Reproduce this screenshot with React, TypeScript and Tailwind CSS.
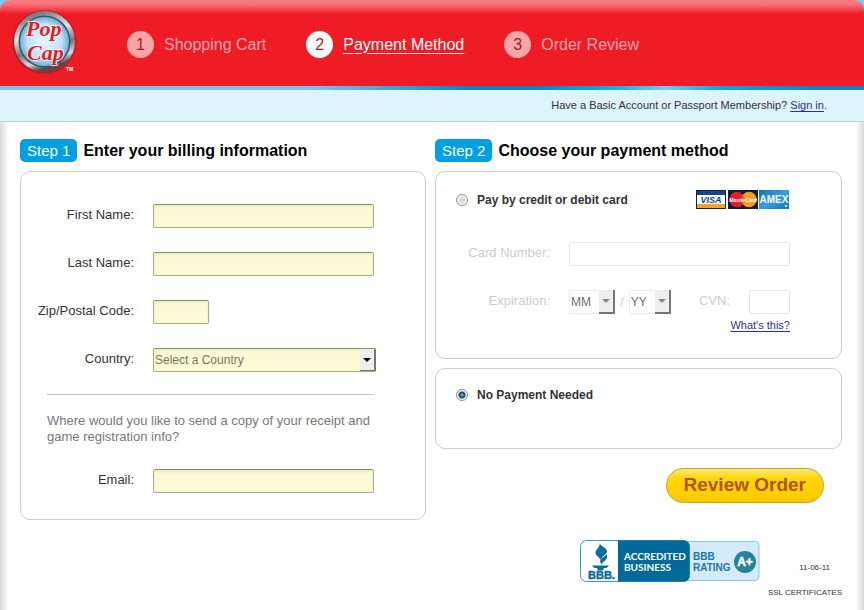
import type { ReactNode } from 'react';

const steps = [
  { number: 1, label: 'Shopping Cart' },
  { number: 2, label: 'Payment Method' },
  { number: 3, label: 'Order Review' },
];

const currentStep = 2;

function Logo() {
  return (
    <svg width="66" height="68" viewBox="0 0 66 68" role="img" aria-label="PopCap">
      <defs>
        <linearGradient id="ring" x1="0" y1="0" x2="0.3" y2="1">
          <stop offset="0" stopColor="#4d4a4b" />
          <stop offset="0.2" stopColor="#8f8f92" />
          <stop offset="0.45" stopColor="#e4e4e6" />
          <stop offset="0.7" stopColor="#77777a" />
          <stop offset="0.88" stopColor="#d8d8da" />
          <stop offset="1" stopColor="#5a4a4a" />
        </linearGradient>
        <radialGradient id="disc" cx="0.5" cy="0.5" r="0.5">
          <stop offset="0" stopColor="#e9f5fd" />
          <stop offset="0.7" stopColor="#c3e2f5" />
          <stop offset="1" stopColor="#6fb0d8" />
        </radialGradient>
      </defs>
      <circle cx="32.5" cy="33" r="32" fill="#8e1b20" opacity="0.5" />
      <circle cx="32.5" cy="32.5" r="30.5" fill="url(#ring)" />
      <circle cx="32.5" cy="32.5" r="26" fill="#33576d" />
      <circle cx="32.5" cy="32.5" r="24.5" fill="url(#disc)" />
      <g
        fontFamily="'Liberation Serif', serif"
        fontWeight="bold"
        fontStyle="italic"
        fill="#e01b24"
        stroke="#ffffff"
        strokeWidth="1.4"
        paintOrder="stroke"
        strokeLinejoin="round"
      >
        <text x="14" y="27" fontSize="22">Pop</text>
        <text x="15" y="51" fontSize="22">Cap</text>
      </g>
      <text x="54" y="62" fontFamily="'Liberation Sans', sans-serif" fontWeight="bold" fontSize="5" fill="#fff">TM</text>
    </svg>
  );
}

function CardLogos() {
  return (
    <svg width="94" height="20" viewBox="0 0 94 20" role="img" aria-label="Visa, MasterCard, American Express">
      <defs>
        <linearGradient id="amex" x1="0" y1="0" x2="1" y2="1">
          <stop offset="0" stopColor="#1471b5" />
          <stop offset="0.5" stopColor="#3b9fd6" />
          <stop offset="1" stopColor="#1176bb" />
        </linearGradient>
      </defs>
      <g fontFamily="'Liberation Sans', sans-serif" fontWeight="bold">
        <rect x="0" y="0" width="30" height="19" fill="#1c2434" />
        <rect x="1" y="1" width="28" height="17" fill="#fff" />
        <rect x="1" y="1" width="28" height="4" fill="#17448a" />
        <rect x="1" y="14" width="28" height="4" fill="#f3a22c" />
        <text x="15" y="13" fontSize="9" fontStyle="italic" textAnchor="middle" fill="#173e80">VISA</text>

        <rect x="32" y="0" width="30" height="19" fill="#171a3c" />
        <circle cx="41" cy="9.5" r="7.7" fill="#e0202a" />
        <circle cx="53" cy="9.5" r="7.7" fill="#f5a01f" />
        <path d="M47 4.7a7.7 7.7 0 0 1 0 9.6a7.7 7.7 0 0 1 0-9.6" fill="#e9642a" />
        <text x="47" y="11.5" fontSize="5" fontStyle="italic" textAnchor="middle" fill="#fff">MasterCard</text>

        <rect x="63" y="0" width="30" height="19" fill="url(#amex)" />
        <text x="78" y="13" fontSize="10" textAnchor="middle" fill="#f2faff">AMEX</text>
        <rect x="89" y="15" width="2" height="2" fill="#d9effa" />
      </g>
    </svg>
  );
}

function BbbSeal() {
  return (
    <svg width="180" height="42" viewBox="0 0 180 42" role="img" aria-label="BBB accredited business, rating A+">
      <rect x="70" y="1.5" width="109" height="39" rx="4" fill="#d3ebf8" stroke="#8fc6df" />
      <rect x="0.5" y="0.5" width="109" height="41" rx="6" fill="#fff" stroke="#3e93b8" />
      <path d="M38 0.5h66a5.5 5.5 0 0 1 5.5 5.5v30a5.5 5.5 0 0 1-5.5 5.5H38z" fill="#006b9a" />
      <g fill="#0a6f9d">
        <path d="M19.500 3c1 3.500 7.500 4.500 7.500 8.500c0 3-5 4.500-6.500 8c-1-2-5-3.500-5-7c0-3.500 5-5 4-9.500z" />
        <path d="M26.500 14c1.500 3.500 0 5.500-2 7c-1.500 1.200-2.500 2-2.500 3.500c-1.500-1.200-2.500-2.800-1.500-5c1-2.200 5-2.500 6-5.500z" />
        <path d="M12 25.500h17l-2.500 2.500h-2.500l-1 2.500h-5l-1-2.500h-2.500z" />
      </g>
      <g fontFamily="'Liberation Sans', sans-serif" fontWeight="bold">
        <text x="8" y="39" fontSize="11" fill="#0a6f9d" stroke="#0a6f9d" strokeWidth="0.5">BBB.</text>
      </g>
      <g fontFamily="Lato, sans-serif" fontWeight="bold">
        <text x="44" y="20" fontSize="10" fill="#fff">ACCREDITED</text>
        <text x="44" y="31" fontSize="10" fill="#fff">BUSINESS</text>
      </g>
      <g fontFamily="'Liberation Sans', sans-serif" fontWeight="bold">
        <text x="113" y="20" fontSize="10" fill="#1c78a6">BBB</text>
        <text x="113" y="31" fontSize="10" fill="#1c78a6">RATING</text>
        <circle cx="165" cy="22" r="11" fill="#26839a" />
        <text x="165" y="26" fontSize="12" textAnchor="middle" fill="#fff" stroke="#fff" strokeWidth="0.5">A+</text>
      </g>
    </svg>
  );
}

function Arrow() {
  return (
    <svg width="8" height="4" viewBox="0 0 8 4" aria-hidden="true">
      <path d="M0 0h8l-4 4z" fill="currentColor" />
    </svg>
  );
}

function StepTitle({ step, children }: { step: number; children: ReactNode }) {
  return (
    <div className="mb-[9px] flex items-center gap-[6px]">
      <span className="rounded-[5px] bg-[#009fe3] px-[7px] text-[15px] leading-[23px] text-white whitespace-nowrap">
        Step {step}
      </span>
      <h2 className="text-base leading-[23px] font-bold text-black">{children}</h2>
    </div>
  );
}

function BillingField({ id, label, type = 'text', width }: { id: string; label: string; type?: string; width: string }) {
  return (
    <div className="flex items-center gap-[19px]">
      <label htmlFor={id} className="w-[113px] shrink-0 pb-0.5 text-right text-[#333]">{label}</label>
      <input
        id={id}
        type={type}
        className={`${width} h-6 min-w-0 rounded-[2px] border border-[#a9aa87] border-t-[#8b8c68] bg-[#fafbd5] px-1 shadow-[inset_0_2px_2px_#ecedc9] outline-none`}
      />
    </div>
  );
}

function ExpirySelect({ id, label, placeholder, width }: { id: string; label: string; placeholder: string; width: string }) {
  return (
    <div className={`relative ${width}`}>
      <select
        id={id}
        aria-label={label}
        disabled
        className="block h-6 w-full appearance-none rounded-[2px] border border-[#ececec] bg-white pl-px text-xs text-[#6d6d6d]"
      >
        <option>{placeholder}</option>
      </select>
      <span className="pointer-events-none absolute inset-y-0 right-0 flex w-4 items-center justify-center border-r-2 border-b-2 border-[#777] bg-[#eee] text-[#888]">
        <Arrow />
      </span>
    </div>
  );
}

const radioStyle =
  'size-3 shrink-0 appearance-none rounded-full border border-[#8e8f8f] bg-[radial-gradient(circle,#c9c9c9_0,#ececec_4px,#fff_5px)] checked:bg-[radial-gradient(circle,#8fd0ee_0,#1c5f8c_2px,#17466b_3px,#f0f0f0_4px)]';

export default function App() {
  return (
    <div className="flex min-h-screen flex-col bg-[#7bcbf0] font-['Liberation_Sans',Arial,sans-serif] text-[13px]">
      <header className="flex h-[86px] items-center rounded-t-[10px] bg-[linear-gradient(#f97b83_0,#f8727a_4px,#ee1c25_14px)] pl-3">
        <Logo />
        <nav className="ml-[49px]">
          <ol className="flex items-center gap-10">
            {steps.map((step) => (
              <li
                key={step.number}
                className={`flex items-center gap-[10px] pt-[3px] text-base ${step.number === currentStep ? 'text-white' : 'text-[#f8a5a8]'}`}
              >
                <span
                  className={`flex size-[27px] items-center justify-center rounded-full text-[#a51c22] ${step.number === currentStep ? 'bg-white' : 'bg-[#f8a5a8]'}`}
                >
                  {step.number}
                </span>
                {step.number === currentStep ? (
                  <a href="#payment" className="underline underline-offset-3">{step.label}</a>
                ) : (
                  <span>{step.label}</span>
                )}
              </li>
            ))}
          </ol>
        </nav>
      </header>

      <div className="h-1 bg-[linear-gradient(to_right,#78c5ec_0%,#78c5ec_36%,#0c82c9_54%,#0c82c9_62%,#0fb0e6_71%,#78c9ec_77%,#0fa8e0_83%,#1580c8_94%)]" />

      <div className="h-8 border-b border-[#c3d3d8] bg-[#dcf4fe] pr-[37px] text-right text-[11px] leading-[31px] text-[#333]">
        Have a Basic Account or Passport Membership?{' '}
        <a href="#signin" className="text-[#2e3192] underline underline-offset-2">Sign in</a>.
      </div>

      <main className="grow bg-[linear-gradient(to_right,#d9d9d9_0,#fff_9px,#fff_calc(100%-9px),#d9d9d9_100%)] pt-[17px] pr-[22px] pl-5">
        <form className="grid grid-cols-[406fr_407fr] items-start gap-[9px]">
          <section>
            <StepTitle step={1}>Enter your billing information</StepTitle>
            <div className="rounded-[10px] border border-[#ccc] bg-white pt-8 pb-[26px]">
              <div className="flex flex-col gap-6">
                <BillingField id="first-name" label="First Name:" width="w-[221px]" />
                <BillingField id="last-name" label="Last Name:" width="w-[221px]" />
                <BillingField id="zip" label="Zip/Postal Code:" width="w-14" />
                <div className="flex items-center gap-[19px]">
                  <label htmlFor="country" className="w-[113px] shrink-0 pb-0.5 text-right text-[#333]">Country:</label>
                  <div className="relative w-[223px]">
                    <select
                      id="country"
                      className="block h-6 w-full appearance-none rounded-[2px] border border-[#a9aa87] border-t-[#8b8c68] bg-[#fafbd5] pl-px text-xs text-[#77785a] shadow-[inset_0_2px_2px_#ecedc9]"
                    >
                      <option>Select a Country</option>
                    </select>
                    <span className="pointer-events-none absolute inset-y-px right-0 flex w-4 items-center justify-center border-r-2 border-b border-[#77776a] bg-[#eee] text-black">
                      <Arrow />
                    </span>
                  </div>
                </div>
              </div>
              <div className="mt-[22px] mr-[51px] ml-[26px] border-t border-[#c4c4c4] pt-[18px] leading-4 text-[#777]">
                Where would you like to send a copy of your receipt and game registration info?
              </div>
              <div className="mt-6">
                <BillingField id="email" label="Email:" type="email" width="w-[221px]" />
              </div>
            </div>
          </section>

          <section>
            <StepTitle step={2}>Choose your payment method</StepTitle>
            <div className="rounded-[10px] border border-[#ccc] bg-white pt-[18px] pr-[51px] pb-[26px] pl-5">
              <div className="flex items-center justify-between">
                <label className="flex items-center gap-[9px] text-xs font-bold text-[#333]">
                  <input type="radio" name="payment" value="card" className={radioStyle} />
                  Pay by credit or debit card
                </label>
                <CardLogos />
              </div>
              <div className="mt-8 flex items-center text-[#ccc]">
                <label htmlFor="card-number" className="w-[94px] shrink-0 pb-0.5 text-right">Card Number:</label>
                <input
                  id="card-number"
                  disabled
                  className="ml-[19px] h-6 min-w-0 grow rounded-[2px] border border-[#e6e6e6] bg-white px-1"
                />
              </div>
              <div className="mt-6 flex items-center text-[#ccc]">
                <label htmlFor="exp-month" className="w-[94px] shrink-0 pb-0.5 text-right">Expiration:</label>
                <div className="ml-[19px] flex grow items-center justify-between">
                  <div className="flex items-center gap-[5px]">
                    <ExpirySelect id="exp-month" label="Expiration month" placeholder="MM" width="w-[46px]" />
                    <span>/</span>
                    <ExpirySelect id="exp-year" label="Expiration year" placeholder="YY" width="w-[42px]" />
                  </div>
                  <div className="flex items-center gap-[19px]">
                    <label htmlFor="cvn" className="pb-0.5">CVN:</label>
                    <input id="cvn" disabled className="h-6 w-[41px] rounded-[2px] border border-[#e6e6e6] bg-white px-1" />
                  </div>
                </div>
              </div>
              <div className="mt-1 text-right text-[11px] leading-[14px]">
                <a href="#cvn-help" className="text-[#2e3192] underline underline-offset-2">What's this?</a>
              </div>
            </div>

            <div className="mt-[9px] rounded-[10px] border border-[#ccc] bg-white pt-[18px] pb-[45px] pl-5">
              <label className="flex items-center gap-[9px] text-xs font-bold text-[#333]">
                <input type="radio" name="payment" value="none" defaultChecked className={radioStyle} />
                No Payment Needed
              </label>
            </div>

            <div className="mt-[19px] mr-[18px] text-right">
              <button
                type="submit"
                className="h-[35px] rounded-full border border-[#c9a227] bg-[linear-gradient(#ffe873_0,#ffd60f_9px,#ffd000_70%,#fbc400)] px-[17px] text-[19px] font-bold text-[#b05505]"
              >
                Review Order
              </button>
            </div>
          </section>
        </form>

        <footer className="mt-5 flex justify-end gap-2 text-[8px] leading-[10px] text-[#333]">
          <BbbSeal />
          <div className="flex flex-col items-end gap-[15px] pt-[23px]">
            <p className="pr-3">11-06-11</p>
            <p>SSL CERTIFICATES</p>
          </div>
        </footer>
      </main>
    </div>
  );
}
